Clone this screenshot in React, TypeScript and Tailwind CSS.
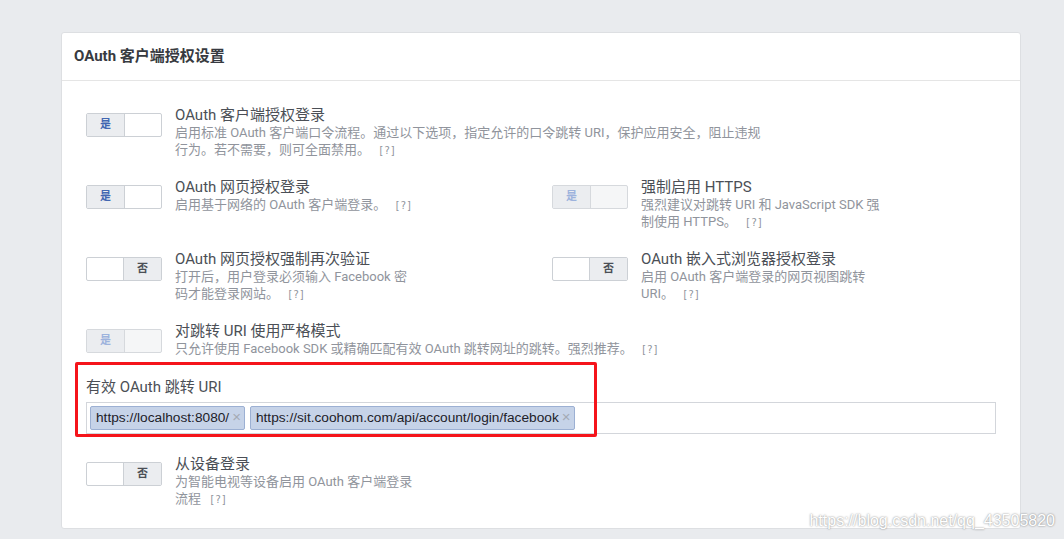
import React from "react";

type Mode = "on" | "onDim" | "off";

const Toggle = ({ mode }: { mode: Mode }) => {
  if (mode === "off") {
    return (
      <div className="flex h-6 w-[76px] shrink-0 rounded-[2px] border border-[#ccd0d5] bg-white overflow-hidden">
        <div className="w-[37px] border-r border-[#ccd0d5]"></div>
        <div className="flex flex-1 items-center justify-center bg-[#ebedf0] text-[11px] font-bold text-[#4b4f56]">
          否
        </div>
      </div>
    );
  }
  const dim = mode === "onDim";
  return (
    <div
      className={`flex h-6 w-[76px] shrink-0 rounded-[2px] border overflow-hidden ${
        dim ? "border-[#d6d9dd] bg-[#f5f6f7]" : "border-[#ccd0d5] bg-white"
      }`}
    >
      <div
        className={`flex w-[38px] items-center justify-center border-r bg-[#ebedf0] text-[11px] font-bold ${
          dim ? "border-[#d6d9dd] text-[#9db3dd]" : "border-[#ccd0d5] text-[#4267b2]"
        }`}
      >
        是
      </div>
      <div className="flex-1"></div>
    </div>
  );
};

const Help = () => (
  <span className="ml-2 text-[10px] leading-none text-[#90949c] font-['DejaVu_Sans_Mono',monospace]">[?]</span>
);

const Setting = ({
  mode,
  title,
  lines,
}: {
  mode: Mode;
  title: string;
  lines: string[];
}) => (
  <div className="flex items-start">
    <div className="mt-[7px]">
      <Toggle mode={mode} />
    </div>
    <div className="ml-[13px]">
      <div className="h-[18px] text-[15px] leading-[18px] text-[#4b4f56] whitespace-nowrap">{title}</div>
      <div className="text-[13px] leading-[17px] text-[#90949c]">
        {lines.map((line, i) => (
          <div className="h-[17px] whitespace-nowrap" key={i}>
            {line}
            {i === lines.length - 1 && <Help />}
          </div>
        ))}
      </div>
    </div>
  </div>
);

const Tag = ({ text }: { text: string }) => (
  <div className="flex h-6 items-center rounded-[2px] border border-[#9cb0d3] bg-[#c6d3e8] pl-[5px] pr-[3px]">
    <span className="text-[13.7px] text-[#1d2129] font-['Liberation_Sans',Arial,sans-serif]">{text}</span>
    <span className="ml-[3px] -mt-[4px] text-[15px] leading-none text-[#a4aab4] font-['Liberation_Sans',Arial,sans-serif]">×</span>
  </div>
);

export default function App() {
  return (
    <div className="relative min-h-screen bg-[#e9ebee] pt-8 font-['Roboto','Noto_Sans_CJK_SC',sans-serif]">
      <div className="ml-[61px] w-[960px] rounded-[3px] border border-[#dddfe2] bg-white">
        <div className="flex h-12 items-center border-b border-[#e5e5e5] px-3">
          <h2 className="text-[15px] font-bold text-[#373a40]">OAuth 客户端授权设置</h2>
        </div>

        <div className="px-6 pt-[25px] pb-[21px]">
          <div className="mb-5">
            <Setting
              mode="on"
              title="OAuth 客户端授权登录"
              lines={[
                "启用标准 OAuth 客户端口令流程。通过以下选项，指定允许的口令跳转 URI，保护应用安全，阻止违规",
                "行为。若不需要，则可全面禁用。",
              ]}
            />
          </div>

          <div className="mb-5 grid grid-cols-[466px_1fr]">
            <Setting mode="on" title="OAuth 网页授权登录" lines={["启用基于网络的 OAuth 客户端登录。"]} />
            <Setting
              mode="onDim"
              title="强制启用 HTTPS"
              lines={["强烈建议对跳转 URI 和 JavaScript SDK 强", "制使用 HTTPS。"]}
            />
          </div>

          <div className="mb-5 grid grid-cols-[466px_1fr]">
            <Setting
              mode="off"
              title="OAuth 网页授权强制再次验证"
              lines={["打开后，用户登录必须输入 Facebook 密", "码才能登录网站。"]}
            />
            <Setting
              mode="off"
              title="OAuth 嵌入式浏览器授权登录"
              lines={["启用 OAuth 客户端登录的网页视图跳转", "URI。"]}
            />
          </div>

          <div className="mb-[21px]">
            <Setting
              mode="onDim"
              title="对跳转 URI 使用严格模式"
              lines={["只允许使用 Facebook SDK 或精确匹配有效 OAuth 跳转网址的跳转。强烈推荐。"]}
            />
          </div>

          <div className="relative">
            <div className="h-[18px] text-[15px] leading-[18px] text-[#4b4f56]">有效 OAuth 跳转 URI</div>
            <div className="mt-[6px] flex h-8 items-center gap-[5px] border border-[#d3d6db] px-[3px]">
              <Tag text="https://localhost:8080/" />
              <Tag text="https://sit.coohom.com/api/account/login/facebook" />
            </div>
            <div className="pointer-events-none absolute -left-[11px] -top-[16px] h-[75px] w-[522px] rounded-[2px] border-[3px] border-[#f5141b]"></div>
          </div>

          <div className="mt-[21px]">
            <Setting
              mode="off"
              title="从设备登录"
              lines={["为智能电视等设备启用 OAuth 客户端登录", "流程"]}
            />
          </div>
        </div>
      </div>

      <div className="absolute right-[9px] top-[511px] text-[16px] leading-5 text-white font-['Liberation_Sans',Arial,sans-serif] [text-shadow:0_0_2px_rgba(0,0,0,0.55)]">
        https://blog.csdn.net/qq_43505820
      </div>
    </div>
  );
}
